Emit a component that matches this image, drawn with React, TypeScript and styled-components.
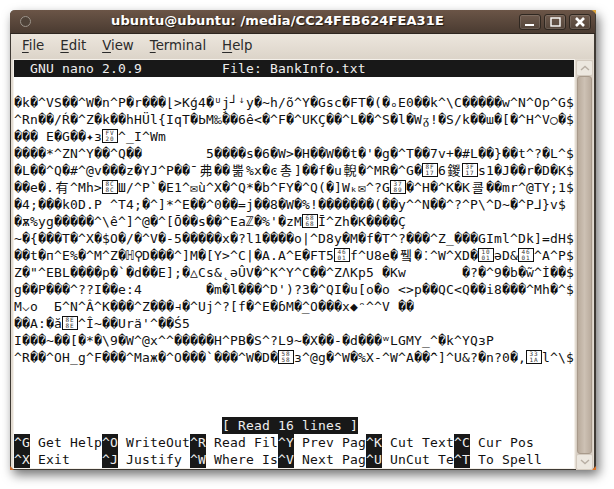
import React from "react";
import styled, { createGlobalStyle } from "styled-components";

const GlobalStyle = createGlobalStyle`
  html, body {
    margin: 0;
    background: #fff;
  }
`;

const MENU = [
  { key: "F", rest: "ile" },
  { key: "E", rest: "dit" },
  { key: "V", rest: "iew" },
  { key: "T", rest: "erminal" },
  { key: "H", rest: "elp" },
];

// [abcd] is one of the little hex boxes gtk draws for a missing glyph
const LINES = [
  "",
  "�k�^VS��^W�n^P�r���⌊>Kǵ4�ᵁj̧┘ꜜy�~h/õ^Y�Gsc�FT�(�ₒE0��k^\\C�����w^N^Op^G$",
  "^Rn��/Ŕ�^Z�k��hHÜl{IqT�ЬM‰��6ê<�^F�^UKÇ��^L��^S�l�Wᵹ!�S/k��ɯ�[�^H^V○�$",
  "��� E�G��✦ɜ[FV20]^_I^Wm",
  "����*^ZN^Y��^Q��        5����s�6�W>�H��W��t�'�g�^T��7v+�#L��}��t^?�L^$",
  "�L��^Q�#^@v���z�YJ^P��¯弗��뿖%x�ͼ총]��f�u輗�^MR�^G�[8F17]6鍐[3F17]s1�J��r�D�K$",
  "��e�.有^Mh>[8C8C]Ш/^P`�E1^✉ù^X�^Q*�b^FY�^Q(�]Wₖ✉^?G[3789]�^H�^K�K쿌��mr^@TY;1$",
  "�4;���k0D.P ^T4;�^]*^E��^0��=j��8�W�%!�������(��y^^N��^?^P\\^D~�^P⅃}v$",
  "�ѫ%yg�����^\\ê^]^@�^[Ō��s��^Eaℤ�%'�zM[6868]Ī^Zh�K����Ç",
  "~�{���T�^X�$O�/�^V�-5�����x�?l1����o|^D8y�M�f�T^?���^Z_���GIml^Dk]=dH$",
  "��t�ᴨ^E%�^M^Z�ℍ⚲D���^]M�[Y>^C|�A.A^E�FT5[4601]f^U8e�퓈�⁚^W^XD�[1001]əD&[4601]^A^P$",
  "Z�\"^EBL����p�`�d��E];�△Cs&˛ǝÛV�^K^Y^C��^ZɅKp5 �Kw       �?�^9�b�w̃^İ��$",
  "g��P���^??I��e:4        �m�l���^D')?3�^QI�u[o�o <>p��QC<Q��i8���^Mh�^$",
  "M⌵o  Б^N^Â^K���^Z���⫞�^Uj^?[f�^E�ɓM�̲^O���x◆ᵔ^^V ��",
  "��A:�ă[8E8E]^Î~��Urӓ'^��Ś5",
  "I���~��[�*�\\9�W^@x^^�����H^PB�S^?L9~�X��-�d���ʷLGMY_^�k^YQɜP",
  "^R��^OH_g^F���^Maж�^O���`���^W�D�[5858]ɜ^@g�^W�%X-^W^A��̄^]^U&?�n?0�,[331A]l^\\$",
  "",
  "",
  "",
];

const SHORTCUTS = [
  [
    { key: "^G", label: "Get Help" },
    { key: "^O", label: "WriteOut" },
    { key: "^R", label: "Read Fil" },
    { key: "^Y", label: "Prev Pag" },
    { key: "^K", label: "Cut Text" },
    { key: "^C", label: "Cur Pos" },
  ],
  [
    { key: "^X", label: "Exit" },
    { key: "^J", label: "Justify" },
    { key: "^W", label: "Where Is" },
    { key: "^V", label: "Next Pag" },
    { key: "^U", label: "UnCut Te" },
    { key: "^T", label: "To Spell" },
  ],
];

const isWide = (ch: string) => /[\u2e80-\u9fff\uac00-\ud7af\uf900-\ufaff]/.test(ch);

const LineText = ({ text }: { text: string }) => {
  const parts = text.match(/\[[0-9A-F][0-9A-Z][0-9A-F]{2}\]|.\p{M}*/gu) || [];
  return (
    <Row>
      {parts.map((part, i) =>
        part.length === 6 && part[0] === "[" ? (
          <HexBox key={i}>
            <span>{part.slice(1, 3)}</span>
            <span>{part.slice(3, 5)}</span>
          </HexBox>
        ) : (
          <Cell key={i} $wide={isWide(part)}>
            {part}
          </Cell>
        )
      )}
    </Row>
  );
};

const App = () => {
  return (
    <Page>
      <GlobalStyle />
      <Window>
        <Corner $side="top-right" />
        <Corner $side="bottom-right" />
        <Corner $side="bottom-left" />
        <TitleBar>
          <MenuDot />
          <Title>ubuntu@ubuntu: /media/CC24FEB624FEA31E</Title>
          <WindowButtons>
            <WindowButton>
              <svg width="10" height="10" viewBox="0 0 10 10">
                <rect x="0" y="7" width="9" height="2" fill="#fff" />
              </svg>
            </WindowButton>
            <WindowButton>
              <svg width="11" height="10" viewBox="0 0 11 10">
                <rect x="1" y="1" width="9" height="8" fill="none" stroke="#fff" strokeWidth="1.4" />
              </svg>
            </WindowButton>
            <WindowButton>
              <svg width="10" height="10" viewBox="0 0 10 10">
                <path d="M1 1 L9 9 M9 1 L1 9" stroke="#fff" strokeWidth="2.6" />
              </svg>
            </WindowButton>
          </WindowButtons>
        </TitleBar>
        <MenuBar>
          {MENU.map(item => (
            <MenuItem key={item.key}>
              <u>{item.key}</u>
              {item.rest}
            </MenuItem>
          ))}
        </MenuBar>
        <Content>
          <Terminal>
            <TopBar>{"  GNU nano 2.0.9          File: BankInfo.txt"}</TopBar>
            {LINES.map((line, i) => (
              <LineText key={i} text={line} />
            ))}
            <StatusRow>
              <Inverse>[ Read 16 lines ]</Inverse>
            </StatusRow>
            {SHORTCUTS.map((row, i) => (
              <ShortcutRow key={i}>
                {row.map(item => (
                  <Shortcut key={item.key}>
                    <Inverse>{item.key}</Inverse>
                    <ShortcutLabel>{item.label}</ShortcutLabel>
                  </Shortcut>
                ))}
              </ShortcutRow>
            ))}
          </Terminal>
          <ScrollBar>
            <ScrollButton>
              <svg width="10" height="6" viewBox="0 0 10 6">
                <path d="M1 5 L5 1.5 L9 5" fill="none" stroke="#b8afa4" strokeWidth="1.4" />
              </svg>
            </ScrollButton>
            <ScrollThumb />
            <ScrollButton>
              <svg width="10" height="6" viewBox="0 0 10 6">
                <path d="M1 1 L5 4.5 L9 1" fill="none" stroke="#b8afa4" strokeWidth="1.4" />
              </svg>
            </ScrollButton>
          </ScrollBar>
        </Content>
      </Window>
    </Page>
  );
};

export default App;

const Page = styled.div`
  width: 614px;
  height: 489px;
  padding: 10px 0 0 10px;
  box-sizing: border-box;
  overflow: hidden;
  background: #fff;
`;

const Window = styled.div`
  position: relative;
  width: 586px;
  height: 460px;
  box-sizing: border-box;
  display: flex;
  flex-direction: column;
  border: 1px solid #3f3a34;
  border-top: none;
  border-right-width: 2px;
  border-radius: 5px 5px 3px 3px;
  background: #e3dcd2;
  box-shadow: 3px 5px 11px rgba(0, 0, 0, 0.55);
`;

const CORNER_STYLES = {
  "top-right": "right: -2px; top: 0; border-top: 4px solid #e0a63c; border-left: 4px solid transparent;",
  "bottom-right": "right: -2px; bottom: -1px; border-bottom: 4px solid #e0762a; border-left: 4px solid transparent;",
  "bottom-left": "left: -1px; bottom: -1px; border-bottom: 4px solid #c9682a; border-right: 4px solid transparent;",
};

const Corner = styled.span<{ $side: keyof typeof CORNER_STYLES }>`
  position: absolute;
  z-index: 1;
  ${({ $side }) => CORNER_STYLES[$side]}
`;

const TitleBar = styled.div`
  position: relative;
  height: 23px;
  flex: none;
  margin: 0 -1px;
  display: flex;
  align-items: center;
  justify-content: center;
  background: linear-gradient(#6b5547, #4a3b31);
  border-bottom: 1px solid #2e2620;
  border-radius: 5px 5px 0 0;
`;

const MenuDot = styled.span`
  position: absolute;
  left: 10px;
  top: 6px;
  width: 9px;
  height: 9px;
  border-radius: 50%;
  border: 1px solid #9c948b;
  background: #4f4238;
`;

const Title = styled.div`
  font: bold 13px "DejaVu Sans", sans-serif;
  letter-spacing: 0.1px;
  color: #fff;
  text-shadow: 1px 1px 1px #1d1712;
  white-space: pre;
  margin: 0 50px 2px 0;
`;

const WindowButtons = styled.div`
  position: absolute;
  right: 4px;
  top: 4px;
  display: flex;
  gap: 3px;
`;

const WindowButton = styled.div`
  width: 22px;
  height: 16px;
  box-sizing: border-box;
  display: flex;
  align-items: center;
  justify-content: center;
  border: 1px solid #2f2720;
  border-radius: 3px;
  background: linear-gradient(#6d594c, #54453a);
  box-shadow: inset 0 0 0 1px rgba(255, 255, 255, 0.12);
`;

const MenuBar = styled.div`
  height: 25px;
  flex: none;
  box-sizing: border-box;
  display: flex;
  align-items: center;
  padding: 0 0 3px 3px;
  background: linear-gradient(#ece6dd, #dcd4c9);
`;

const MenuItem = styled.div`
  font: 13.33px "DejaVu Sans", sans-serif;
  color: #2b2b2b;
  padding: 0 8px;
  u {
    text-underline-offset: 2px;
  }
`;

const Content = styled.div`
  flex: 1;
  display: flex;
  padding: 1px 3px 3px 3px;
  min-height: 0;
`;

const Terminal = styled.div`
  width: 560px;
  height: 408px;
  flex: none;
  background: #fff;
  color: #111;
  font: 13px/17px "DejaVu Sans Mono", monospace;
  letter-spacing: 0.17px;
  white-space: pre;
  overflow: hidden;
  box-shadow: 0 0 0 1px #f4f0ea;
`;

const TopBar = styled.div`
  height: 17px;
  background: #181818;
  color: #eee;
`;

const Row = styled.div`
  height: 17px;
  display: flex;
`;

const Cell = styled.span<{ $wide: boolean }>`
  flex: none;
  width: ${({ $wide }) => ($wide ? 16 : 8)}px;
  text-align: center;
  letter-spacing: 0;
  font-family: "DejaVu Sans Mono", "DejaVu Sans", "Noto Sans CJK KR", monospace;
`;

const HexBox = styled.span`
  flex: none;
  width: 16px;
  height: 14px;
  margin-top: 1px;
  box-sizing: border-box;
  border: 1px solid #111;
  display: flex;
  flex-direction: column;
  align-items: center;
  font-size: 6px;
  line-height: 6px;
  letter-spacing: 1px;
  color: #333;
`;

const StatusRow = styled.div`
  height: 17px;
  padding-left: 208px;
`;

const Inverse = styled.span`
  display: inline-block;
  height: 17px;
  background: #181818;
  color: #eee;
`;

const ShortcutRow = styled.div`
  height: 17px;
  display: flex;
`;

const Shortcut = styled.div`
  width: 88px;
  flex: none;
  display: flex;
  gap: 8px;
`;

const ShortcutLabel = styled.span`
  flex: none;
`;

const ScrollBar = styled.div`
  width: 17px;
  height: 410px;
  margin: 0 0 0 2px;
  flex: none;
  display: flex;
  flex-direction: column;
  background: #d8cfc4;
`;

const ScrollButton = styled.div`
  height: 16px;
  flex: none;
  box-sizing: border-box;
  display: flex;
  align-items: center;
  justify-content: center;
  border: 1px solid #d3cabf;
  border-radius: 2px;
  background: #ece7df;
`;

const ScrollThumb = styled.div`
  flex: 1;
  margin: 0 1px;
  border: 1px solid #a89a8b;
  border-radius: 3px;
  background: linear-gradient(90deg, #b9ab9c, #cdc1b4 50%, #baac9e);
`;
